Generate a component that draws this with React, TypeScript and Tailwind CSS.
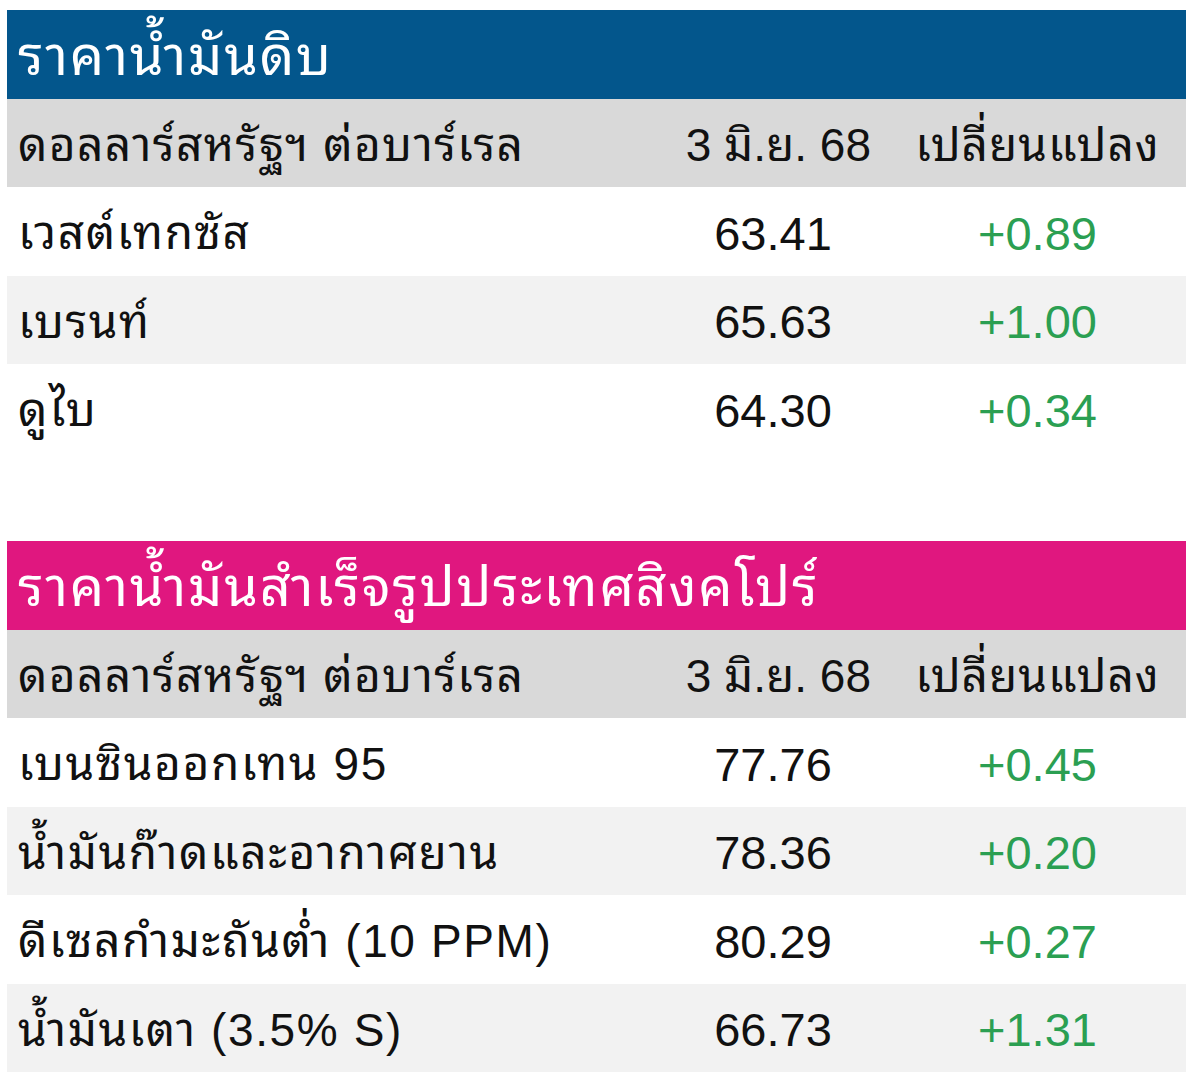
import React from 'react';

type Row = { name: string; price: string; change: string };

const crude: Row[] = [
  { name: 'เวสต์เทกซัส', price: '63.41', change: '+0.89' },
  { name: 'เบรนท์', price: '65.63', change: '+1.00' },
  { name: 'ดูไบ', price: '64.30', change: '+0.34' },
];

const refined: Row[] = [
  { name: 'เบนซินออกเทน 95', price: '77.76', change: '+0.45' },
  { name: 'น้ำมันก๊าดและอากาศยาน', price: '78.36', change: '+0.20' },
  { name: 'ดีเซลกำมะถันต่ำ (10 PPM)', price: '80.29', change: '+0.27' },
  { name: 'น้ำมันเตา (3.5% S)', price: '66.73', change: '+1.31' },
];

const font = { fontFamily: '"Liberation Sans", "Noto Sans Thai Looped", "Noto Sans Thai", sans-serif' };

const PriceTable: React.FC<{ title: string; titleBg: string; rows: Row[] }> = ({ title, titleBg, rows }) => (
  <div className="w-[1179px]">
    <div className={`h-[88.5px] flex items-center pl-[11px] pt-[4px] text-white text-[54px] tracking-[1.8px] ${titleBg}`}>
      {title}
    </div>
    <div className="h-[88.5px] grid grid-cols-[650px_232px_297px] items-center pt-[5px] bg-[#d9d9d9] text-[#111] text-[46px]">
      <div className="pl-[11px] tracking-[1.4px]">ดอลลาร์สหรัฐฯ ต่อบาร์เรล</div>
      <div className="text-right pr-[18px]">3 มิ.ย. 68</div>
      <div className="text-center tracking-[1px]">เปลี่ยนแปลง</div>
    </div>
    {rows.map((r, i) => (
      <div
        key={r.name}
        className={`h-[88.5px] grid grid-cols-[650px_232px_297px] items-center pt-[5px] text-[47px] ${i % 2 === 1 ? 'bg-[#f2f2f2]' : 'bg-white'}`}
      >
        <div className="pl-[11px] text-[#111] text-[46px] tracking-[1.6px]">{r.name}</div>
        <div className="text-center text-[#111]">{r.price}</div>
        <div className="text-center text-[#2b9f52]">{r.change}</div>
      </div>
    ))}
  </div>
);

const App: React.FC = () => {
  return (
    <div className="min-h-screen bg-white pt-[10px] pl-[7px]" style={font}>
      <PriceTable title="ราคาน้ำมันดิบ" titleBg="bg-[#03568c]" rows={crude} />
      <div className="h-[88.5px]"></div>
      <PriceTable title="ราคาน้ำมันสำเร็จรูปประเทศสิงคโปร์" titleBg="bg-[#e0177f]" rows={refined} />
    </div>
  );
};

export default App;
